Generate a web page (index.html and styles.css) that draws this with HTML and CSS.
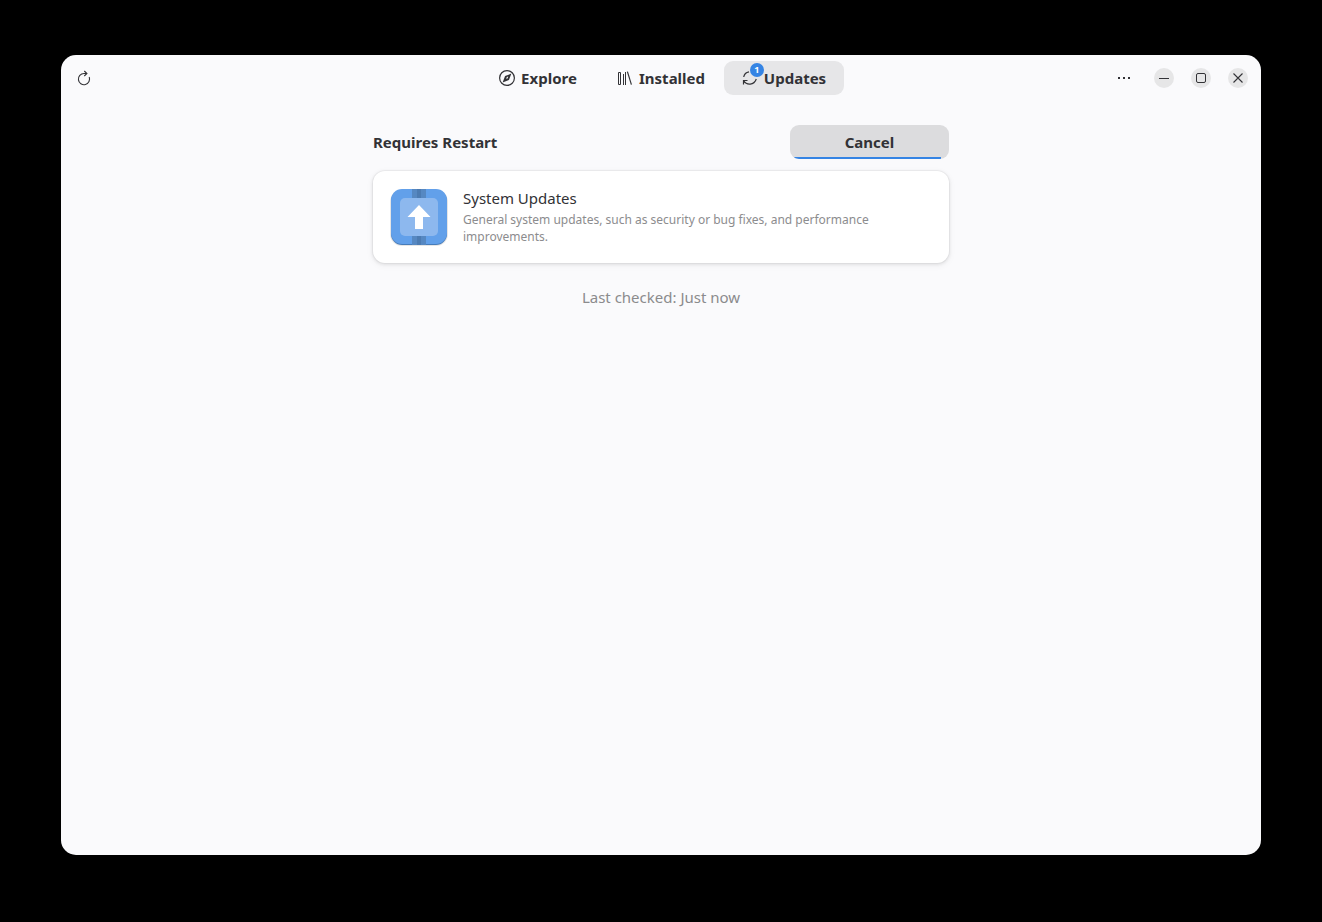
FILE: index.html
```html
<!DOCTYPE html>
<html lang="en">
<head>
    <meta charset="UTF-8">
    <meta name="viewport" content="width=device-width, initial-scale=1.0">
    <title>Software Updates</title>
    <link rel="stylesheet" href="styles.css">
</head>
<body>
    <div class="window">
        <header class="headerbar">
            <div class="header-start">
                <button class="icon-button" type="button" aria-label="Check for updates">
                    <svg width="16" height="16" viewBox="0 0 16 16" fill="none" stroke="currentColor" stroke-width="1.1">
                        <path d="M10 3.5H8A5.6 5.6 0 1 0 13.2 7"/>
                        <path d="M8.3 1L10.9 3.5L8.3 6"/>
                    </svg>
                </button>
            </div>
            <nav class="switcher">
                <button class="tab" type="button">
                    <svg width="16" height="16" viewBox="0 0 16 16">
                        <circle cx="8" cy="8" r="7.4" fill="none" stroke="currentColor" stroke-width="1.2"/>
                        <path d="M12.4 3.6L9.9 9.9L3.6 12.4L6.1 6.1Z" fill="currentColor"/>
                        <path d="M7.8 7L9.2 6.6L8.6 8.4L7.2 8.8Z" fill="#fafafc"/>
                    </svg>
                    <span>Explore</span>
                </button>
                <button class="tab" type="button">
                    <svg width="16" height="16" viewBox="0 0 16 16" fill="none" stroke="currentColor">
                        <path d="M1.5 2.5H3.5V14.5H1.5ZM6.5 4V15M8.5 2V15" />
                        <path d="M10.4 1.6L14.4 14.6" stroke-width="1.2"/>
                    </svg>
                    <span>Installed</span>
                </button>
                <button class="tab active" type="button">
                    <span class="tab-icon">
                        <svg width="16" height="16" viewBox="0 0 16 16" fill="none" stroke="currentColor" stroke-width="1.2">
                            <path d="M1.7 7A6.4 6.4 0 0 1 7 1.8"/>
                            <path d="M1.5 14.5V10.5H5.5M1.7 10.6C4.5 15.5 12 15.5 14.3 9"/>
                        </svg>
                        <span class="badge">1</span>
                    </span>
                    <span>Updates</span>
                </button>
            </nav>
            <div class="header-end">
                <button class="icon-button menu-button" type="button" aria-label="Menu">
                    <svg width="16" height="16" viewBox="0 0 16 16" fill="currentColor">
                        <path d="M2 7h2v2H2zM7 7h2v2H7zM12 7h2v2h-2z"/>
                    </svg>
                </button>
                <button class="icon-button" type="button" aria-label="Minimize">
                    <span class="circle">
                        <svg width="16" height="16" viewBox="0 0 16 16" fill="none" stroke="currentColor">
                            <path d="M3 8.5H13"/>
                        </svg>
                    </span>
                </button>
                <button class="icon-button" type="button" aria-label="Maximize">
                    <span class="circle">
                        <svg width="16" height="16" viewBox="0 0 16 16" fill="none" stroke="currentColor">
                            <rect x="3.5" y="3.5" width="9" height="9" rx="1.5"/>
                        </svg>
                    </span>
                </button>
                <button class="icon-button" type="button" aria-label="Close">
                    <span class="circle">
                        <svg width="16" height="16" viewBox="0 0 16 16" fill="none" stroke="currentColor" stroke-width="1.1">
                            <path d="M3.5 3.5L12.5 12.5M12.5 3.5L3.5 12.5"/>
                        </svg>
                    </span>
                </button>
            </div>
        </header>
        <main class="content">
            <div class="section-header">
                <h2>Requires Restart</h2>
                <button class="cancel-button" type="button">
                    Cancel
                    <span class="progress" style="width: 95%"></span>
                </button>
            </div>
            <div class="card">
                <svg class="app-icon" width="64" height="64" viewBox="0 0 64 64">
                    <rect x="3" y="5" width="58" height="56" rx="12" fill="#000" opacity="0.1"/>
                    <rect x="4" y="5" width="56" height="55" rx="11" fill="#467cba"/>
                    <rect x="4" y="4" width="56" height="55" rx="11" fill="#62a0ea"/>
                    <path d="M25 4H39V60H25Z" fill="#5688c2"/>
                    <path d="M30 4H34V60H30Z" fill="#4c7bb2"/>
                    <rect x="13" y="13" width="38" height="38" rx="5" fill="#8db8ee"/>
                    <path d="M32 20L43.5 32H36V44H28V32H20.5Z" fill="#fff"/>
                </svg>
                <div class="card-text">
                    <div class="card-title">System Updates</div>
                    <div class="card-description">General system updates, such as security or bug fixes, and performance improvements.</div>
                </div>
            </div>
            <p class="last-checked">Last checked: Just now</p>
        </main>
    </div>
</body>
</html>
```
FILE: styles.css
```css
* {
    box-sizing: border-box;
}
body {
    font-family: "Noto Sans", sans-serif;
    font-size: 15px;
    line-height: 20px;
    background-color: #000;
    color: #323236;
    margin: 0;
    padding: 55px 61px 67px;
    min-height: 100vh;
    display: flex;
}
button {
    font: inherit;
    color: inherit;
    background: none;
    border: none;
    padding: 0;
    cursor: pointer;
}
svg {
    display: block;
    flex-shrink: 0;
}
.window {
    flex: 1;
    background-color: #fafafc;
    border-radius: 15px;
}
.headerbar {
    display: grid;
    grid-template-columns: 1fr auto 1fr;
    align-items: center;
    padding: 6px;
}
.header-start, .header-end {
    display: flex;
}
.header-end {
    justify-content: flex-end;
    gap: 3px;
}
.icon-button {
    width: 34px;
    height: 34px;
    display: flex;
    align-items: center;
    justify-content: center;
    border-radius: 9px;
}
.menu-button {
    margin-right: 3px;
}
.circle {
    padding: 2px;
    border-radius: 50%;
    background-color: #e6e6e7;
}
.switcher {
    display: flex;
    gap: 3px;
}
.tab {
    min-width: 120px;
    height: 34px;
    display: flex;
    align-items: center;
    justify-content: center;
    gap: 6px;
    border-radius: 9px;
    font-weight: bold;
}
.tab.active {
    background-color: #e6e6e8;
}
.tab-icon {
    position: relative;
}
.badge {
    position: absolute;
    top: -7px;
    right: -6px;
    width: 14px;
    height: 14px;
    border-radius: 50%;
    background-color: #3584e4;
    color: #fff;
    font-size: 9px;
    line-height: 14px;
    text-align: center;
}
.content {
    max-width: 600px;
    margin: 0 auto;
    padding: 24px 12px;
}
.section-header {
    display: flex;
    align-items: center;
    justify-content: space-between;
    margin-bottom: 12px;
}
.section-header h2 {
    font-size: 15px;
    line-height: 20px;
    margin: 0;
}
.cancel-button {
    position: relative;
    width: 159px;
    height: 34px;
    border-radius: 9px;
    overflow: hidden;
    background-color: #dcdcde;
    font-weight: bold;
}
.progress {
    position: absolute;
    left: 0;
    bottom: 0;
    height: 2px;
    background-color: #3584e4;
}
.card {
    display: flex;
    align-items: center;
    gap: 12px;
    padding: 14px;
    border-radius: 12px;
    background-color: #fff;
    box-shadow: 0 0 0 1px rgba(0, 0, 6, 0.03), 0 1px 3px 1px rgba(0, 0, 6, 0.07), 0 2px 6px 2px rgba(0, 0, 6, 0.03);
}
.card-text {
    padding-bottom: 2px;
}
.card-description {
    margin-top: 3px;
    font-size: 12px;
    line-height: 17px;
    color: #8c8c8e;
}
.last-checked {
    margin: 24px 0 0;
    text-align: center;
    color: #8b8b8d;
}
```
